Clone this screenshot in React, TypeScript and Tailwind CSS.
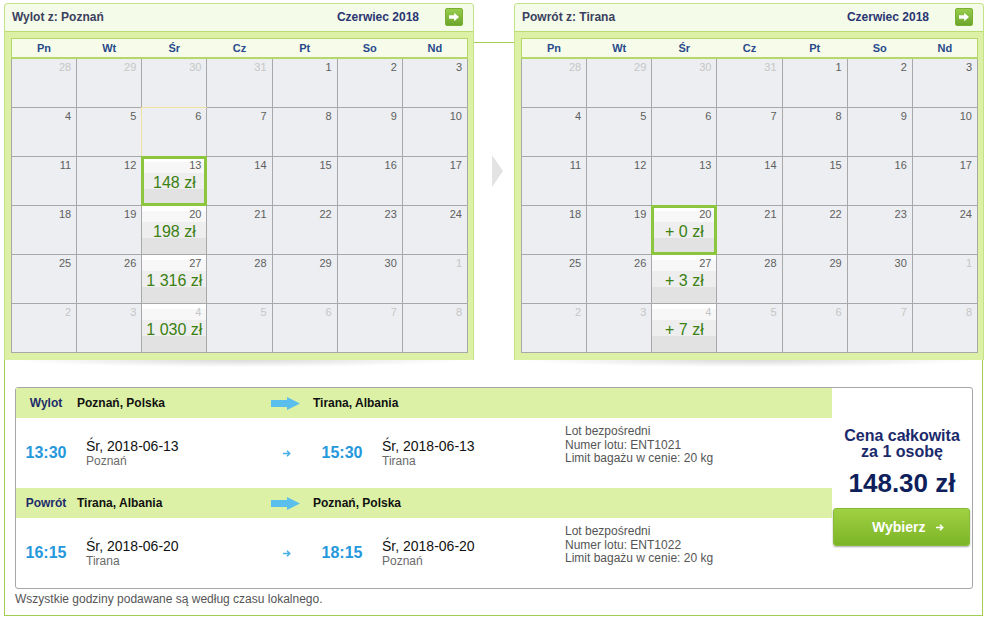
import React from 'react';

type Cell = {
    day: number;
    muted: boolean;
    price?: string;
    selected?: boolean;
    marked?: boolean;
};

const WEEK = ['Pn', 'Wt', 'Śr', 'Cz', 'Pt', 'So', 'Nd'];

// June 2018, Monday first: 4 days of May, 30 of June, 8 of July
const buildMonth = (prices: Record<number, string>, selected: number, marked?: number): Cell[] => {
    const cells: Cell[] = [];
    [28, 29, 30, 31].forEach(d => cells.push({ day: d, muted: true }));
    for (let d = 1; d <= 30; d++) cells.push({ day: d, muted: false });
    for (let d = 1; d <= 8; d++) cells.push({ day: d, muted: true });
    return cells.map((c, i) => ({ ...c, price: prices[i], selected: i === selected, marked: i === marked }));
};

const outbound = buildMonth({ 16: '148 zł', 23: '198 zł', 30: '1 316 zł', 37: '1 030 zł' }, 16, 9);
const inbound = buildMonth({ 23: '+ 0 zł', 30: '+ 3 zł', 37: '+ 7 zł' }, 23);

const NextButton = () => (
    <span className="flex h-[18px] w-[18px] items-center justify-center rounded-[2px] border border-[#79b031] bg-gradient-to-b from-[#98cd4c] to-[#6ca52b]">
        <svg width="12" height="10" viewBox="0 0 12 10">
            <path d="M1 3.3h5.2V0.8L11 5 6.2 9.2V6.7H1z" fill="#fff" />
        </svg>
    </span>
);

const Calendar: React.FC<{ title: string; cells: Cell[] }> = ({ title, cells }) => (
    <div className="w-[470px]">
        <div className="rounded-t-[4px] border border-b-0 border-[#c4e288] bg-[#dcf1a6]">
            <div className="flex h-[28px] items-center justify-between rounded-t-[3px] border-b border-[#bcdc72] bg-[#f4fbe8] pb-px pl-[7px] pr-[10px]">
                <span className="text-[12px] font-bold text-[#3a405e]">{title}</span>
                <div className="flex items-center gap-[26px]">
                    <span className="text-[12px] font-bold text-[#2a3572]">Czerwiec 2018</span>
                    <NextButton />
                </div>
            </div>
            <div className="pb-[7px] pl-[6px] pr-[5px] pt-[6px]">
                <div className="w-[457px]">
                    <div className="grid h-[21px] grid-cols-7 gap-px border border-b-2 border-[#b5d86a] bg-[#f6fce9]">
                        {WEEK.map(d => (
                            <span key={d} className="text-center text-[11px] font-bold leading-[18px] text-[#284a8c]">{d}</span>
                        ))}
                    </div>
                    <div className="grid grid-cols-7 gap-px border border-t-0 border-[#a8a8a8] bg-[#a8a8a8]">
                        {cells.map((c, i) => (
                            <div
                                key={i}
                                className={`relative h-[48px] ${c.price
                                    ? 'bg-[linear-gradient(to_bottom,#ffffff_0%,#ffffff_11%,#f7f7f7_11%,#f7f7f7_34%,#eeeeee_34%,#eeeeee_66%,#e2e2e2_66%,#e2e2e2_100%)]'
                                    : 'bg-[#eceef1]'}`}
                            >
                                <div className={`pr-[5px] pt-[2px] text-right text-[11px] leading-[13px] ${c.muted ? 'text-[#c6c6c6]' : 'text-[#5e5e5e]'}`}>
                                    {c.day}
                                </div>
                                {c.price && (
                                    <div className="mt-[2px] text-center text-[16px] leading-[18px] text-[#3a8012]">{c.price}</div>
                                )}
                                {c.selected && (
                                    <div className="pointer-events-none absolute -inset-px border-[3px] border-[#8cc63f]" />
                                )}
                                {c.marked && (
                                    <div className="pointer-events-none absolute -inset-px border-l border-t border-[#f0e3a0]" />
                                )}
                            </div>
                        ))}
                    </div>
                </div>
            </div>
        </div>
        <div className="mx-[12px] h-[7px] bg-[radial-gradient(ellipse_at_top,#dadada,transparent_72%)]" />
    </div>
);

const BigArrow = () => (
    <svg width="29" height="13" viewBox="0 0 29 13" className="shrink-0">
        <path d="M0 3h16V0l13 6.5L16 13v-3H0z" fill="#5bbfee" />
    </svg>
);

const SmallArrow: React.FC<{ color: string }> = ({ color }) => (
    <svg width="8" height="7" viewBox="0 0 8 7" className="shrink-0">
        <path d="M0 3.5h6.6M4 0.8l2.7 2.7L4 6.2" stroke={color} strokeWidth="1.6" fill="none" />
    </svg>
);

const LegHeader: React.FC<{ label: string; from: string; to: string }> = ({ label, from, to }) => (
    <div className="flex h-[30px] items-center bg-[#dcf1a6] text-[12px] font-bold">
        <span className="w-[60px] text-center text-[#1e2b6a]">{label}</span>
        <span className="w-[195px] pl-px text-[#111]">{from}</span>
        <BigArrow />
        <span className="ml-[13px] text-[#111]">{to}</span>
    </div>
);

type Leg = {
    dep: string; depDate: string; depCity: string;
    arr: string; arrDate: string; arrCity: string;
    flight: string;
};

const LegBody: React.FC<{ leg: Leg }> = ({ leg }) => (
    <div className="flex h-[70px] items-center">
        <span className="w-[60px] text-center text-[16px] font-bold text-[#2598dc]">{leg.dep}</span>
        <div className="ml-[10px] w-[197px]">
            <div className="text-[14px] leading-[16px] text-[#111]">{leg.depDate}</div>
            <div className="text-[12px] leading-[14px] text-[#6a6a6a]">{leg.depCity}</div>
        </div>
        <SmallArrow color="#49b0e5" />
        <span className="ml-[21px] w-[60px] text-center text-[16px] font-bold text-[#2598dc]">{leg.arr}</span>
        <div className="ml-[10px] w-[183px]">
            <div className="text-[14px] leading-[16px] text-[#111]">{leg.arrDate}</div>
            <div className="text-[12px] leading-[14px] text-[#6a6a6a]">{leg.arrCity}</div>
        </div>
        <div className="self-start pt-[7px] text-[12px] leading-[13.5px] text-[#555]">
            <div>Lot bezpośredni</div>
            <div>Numer lotu: {leg.flight}</div>
            <div>Limit bagażu w cenie: 20 kg</div>
        </div>
    </div>
);

const App: React.FC = () => {
    const out: Leg = {
        dep: '13:30', depDate: 'Śr, 2018-06-13', depCity: 'Poznań',
        arr: '15:30', arrDate: 'Śr, 2018-06-13', arrCity: 'Tirana',
        flight: 'ENT1021',
    };
    const back: Leg = {
        dep: '16:15', depDate: 'Śr, 2018-06-20', depCity: 'Tirana',
        arr: '18:15', arrDate: 'Śr, 2018-06-20', arrCity: 'Poznań',
        flight: 'ENT1022',
    };

    return (
        <div className="h-[622px] w-[988px] overflow-hidden bg-white pt-px font-['Liberation_Sans',Arial,sans-serif]">
            <div className="ml-[4px] mt-[41px] h-[574px] w-[979px] border border-[#a2cf4f]">
                {/* calendars sit over the frame's top edge */}
                <div className="-ml-px -mt-[40px] flex w-[980px]">
                    <Calendar title="Wylot z: Poznań" cells={outbound} />
                    <div className="w-[40px] pl-[18px] pt-[152px]">
                        <div className="h-0 w-0 border-y-[16px] border-l-[11px] border-y-transparent border-l-[#e3e3e3]" />
                    </div>
                    <Calendar title="Powrót z: Tirana" cells={inbound} />
                </div>

                <div className="ml-[10px] mt-[20px] flex w-[958px] rounded-[3px] border border-[#a6a6a6] bg-white">
                    <div className="w-[816px]">
                        <LegHeader label="Wylot" from="Poznań, Polska" to="Tirana, Albania" />
                        <LegBody leg={out} />
                        <LegHeader label="Powrót" from="Tirana, Albania" to="Poznań, Polska" />
                        <LegBody leg={back} />
                    </div>
                    <div className="flex w-[140px] flex-col items-center pt-[40px]">
                        <div className="text-center text-[16px] font-bold leading-[16px] text-[#1b2a6b]">
                            Cena całkowita<br />za 1 osobę
                        </div>
                        <div className="mt-[8px] text-[26px] font-bold leading-[30px] text-[#0f1f5c]">148.30 zł</div>
                        <button className="ml-px mt-[10px] flex h-[38px] w-[137px] items-center self-start rounded-[3px] border border-[#86bd35] bg-gradient-to-b from-[#a0d142] to-[#7cb526] pl-[38px] text-[14px] font-bold text-white shadow-[0_1px_2px_rgba(0,0,0,0.35)]">
                            Wybierz
                            <span className="ml-[11px]"><SmallArrow color="#ffffff" /></span>
                        </button>
                    </div>
                </div>

                <p className="ml-[10px] mt-[3px] text-[12px] leading-[14px] text-[#555]">
                    Wszystkie godziny podawane są według czasu lokalnego.
                </p>
            </div>
        </div>
    );
};

export default App;
